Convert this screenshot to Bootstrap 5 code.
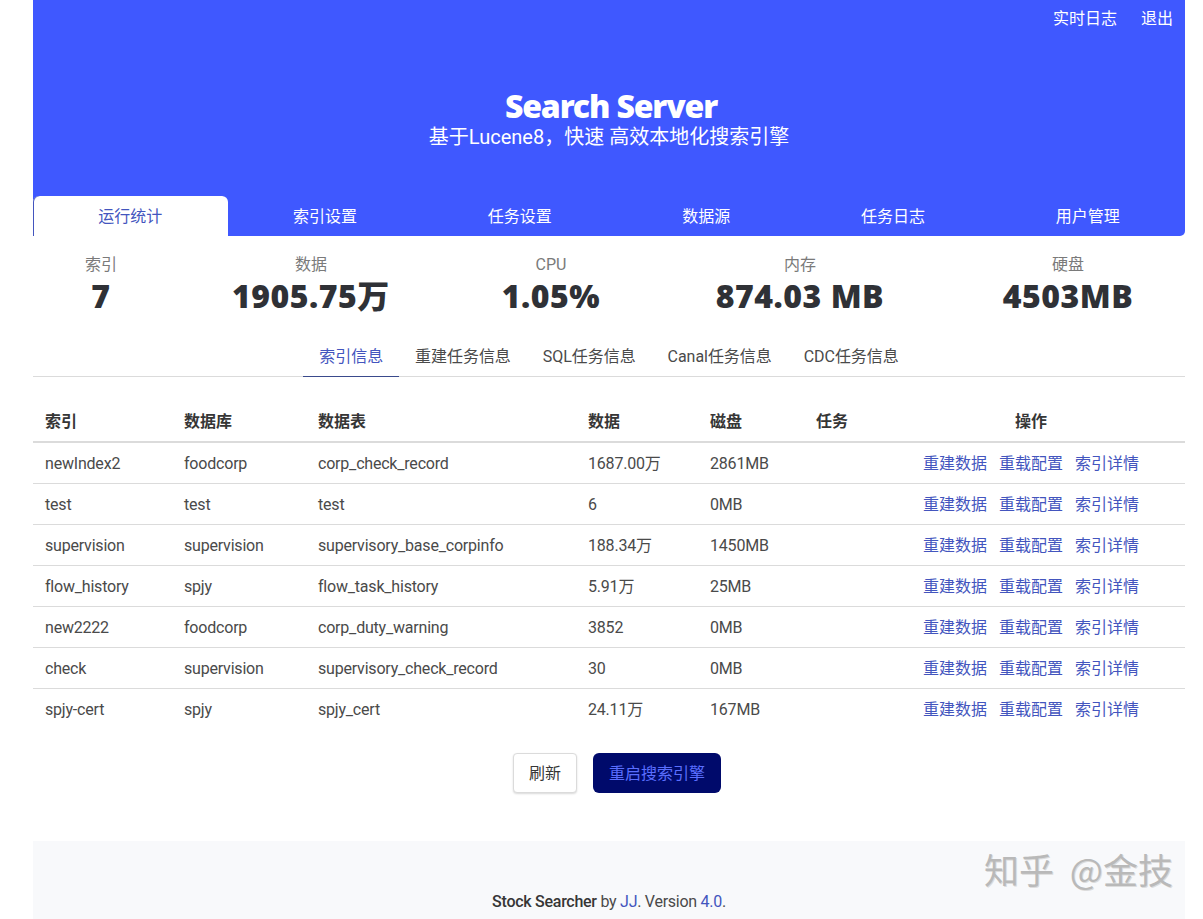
<!DOCTYPE html>
<html lang="zh-CN">
<head>
  <meta charset="UTF-8" />
  <title>Search Server</title>
  <link rel="stylesheet" href="https://cdn.jsdelivr.net/npm/bootstrap@5.3.0/dist/css/bootstrap.min.css" />
  <style>
    html, body { height: 919px; overflow: hidden; }
    body {
      background: #fff;
      color: #4a4a4a;
      font-family: Roboto, "Noto Sans CJK SC", sans-serif;
      font-size: 16px;
    }
    a { text-decoration: none; color: #4355be; }

    .page-wrap { margin: 0 18px 0 33px; width: 1152px; position: relative; }

    /* blue hero */
    .hero-box { background: #3f58ff; height: 236px; border-radius: 0 0 5px 5px; color: #fff; }
    .hero-top { height: 37px; gap: 24px; padding-right: 12px; }
    .hero-top a { color: #fff; line-height: 37px; }
    .hero-body { height: 159px; padding-top: 51px; }
    .hero-title { font-family: "Noto Sans", sans-serif; font-size: 32px; font-weight: 900; line-height: 36px; margin: 0; padding-left: 4px; color: #fff; letter-spacing: -1.15px; }
    .hero-sub { font-size: 20px; line-height: 26px; margin: 0; }
    .hero-tabs { height: 40px; }
    .hero-tabs .nav-link {
      color: #fff; height: 40px; padding: 9px 16px 7px; line-height: 24px;
      border: 0; border-radius: 6px 6px 0 0;
    }
    .hero-tabs .nav-link.active { background: #fff; color: #4355be; box-shadow: inset 1px 0 0 #4355be; }

    /* stats */
    .stat-row { display: grid; grid-template-columns: 136px 284px 196px 302px 1fr; padding-top: 17px; height: 100px; }
    .stat-label { color: #7a7a7a; line-height: 24px; }
    .stat-value { font-family: "Noto Sans", "Noto Sans CJK SC", sans-serif; color: #2f3136; font-size: 32px; font-weight: 900; line-height: 38px; white-space: nowrap; letter-spacing: .5px; }

    /* sub tabs */
    .sub-tabs { border-bottom: 1px solid #dbdbdb; height: 41px; letter-spacing: -.05px; }
    .sub-tabs a { color: #4a4a4a; padding: 9px 16px 7px; height: 41px; line-height: 24px; border-bottom: 1px solid #dbdbdb; }
    .sub-tabs a.active { color: #4355be; border-bottom-color: #3a4a8c; }

    /* index table */
    .index-table { table-layout: fixed; width: 1152px; margin: 24px 0 0; --bs-table-color: #4a4a4a; }
    .index-table th, .index-table td { padding: 9px 12px 7px; line-height: 24px; border-bottom: 1px solid #dbdbdb; }
    .index-table th { color: #363636; font-weight: 700; border-bottom-width: 2px; height: 41px; }
    .index-table td { height: 41px; white-space: nowrap; letter-spacing: -.2px; }
    .index-table tr:last-child td { border-bottom: 0; }
    .op-links { gap: 12px; letter-spacing: 0; }
    .c1 { width: 139px; } .c2 { width: 134px; } .c3 { width: 270px; }
    .c4 { width: 122px; } .c5 { width: 106px; } .c6 { width: 73px; } .c7 { width: 308px; }

    /* buttons */
    .btn-row { gap: 16px; margin-top: 23px; padding-left: 16px; }
    .btn-plain, .btn-plain:hover { height: 40px; width: 64px; padding: 2px 0 0; background: #fff; color: #363636; border: 1px solid #dbdbdb; border-radius: 4px; box-shadow: 0 1px 2px rgba(0,0,0,.15); }
    .btn-navy, .btn-navy:hover { height: 40px; width: 128px; padding: 2px 0 0; background: #000a6b; color: #5a6eff; border: 0; border-radius: 6px; }

    /* footer */
    .foot-box { background: #f8f9fb; margin-top: 48px; height: 78px; padding-top: 49px; line-height: 24px; color: #4a4a4a; letter-spacing: -.27px; }
    .foot-box strong { color: #363636; font-weight: 500; }

    .zhihu-mark {
      position: absolute; left: 951px; top: 846px;
      font-family: "Noto Sans CJK SC", sans-serif;
      font-size: 35px; line-height: 46px; font-weight: 400; color: #b9b9b9; white-space: nowrap;
      word-spacing: 8px; text-shadow: 1px 1px 0 #dcdcdc;
    }
  </style>
</head>
<body>
  <div class="page-wrap">
    <section class="hero-box d-flex flex-column">
      <div class="hero-top d-flex justify-content-end">
        <a href="#">实时日志</a>
        <a href="#">退出</a>
      </div>
      <div class="hero-body text-center">
        <h1 class="hero-title">Search Server</h1>
        <p class="hero-sub">基于Lucene8，快速 高效本地化搜索引擎</p>
      </div>
      <ul class="nav nav-fill hero-tabs">
        <li class="nav-item"><a class="nav-link active" href="#">运行统计</a></li>
        <li class="nav-item"><a class="nav-link" href="#">索引设置</a></li>
        <li class="nav-item"><a class="nav-link" href="#">任务设置</a></li>
        <li class="nav-item"><a class="nav-link" href="#">数据源</a></li>
        <li class="nav-item"><a class="nav-link" href="#">任务日志</a></li>
        <li class="nav-item"><a class="nav-link" href="#">用户管理</a></li>
      </ul>
    </section>

    <section class="stat-row text-center">
      <div><div class="stat-label">索引</div><div class="stat-value">7</div></div>
      <div><div class="stat-label">数据</div><div class="stat-value">1905.75万</div></div>
      <div><div class="stat-label">CPU</div><div class="stat-value">1.05%</div></div>
      <div><div class="stat-label">内存</div><div class="stat-value">874.03 MB</div></div>
      <div><div class="stat-label">硬盘</div><div class="stat-value">4503MB</div></div>
    </section>

    <div class="sub-tabs d-flex justify-content-center">
      <a class="active" href="#">索引信息</a>
      <a href="#">重建任务信息</a>
      <a href="#">SQL任务信息</a>
      <a href="#">Canal任务信息</a>
      <a href="#">CDC任务信息</a>
    </div>

    <table class="table index-table">
      <colgroup>
        <col class="c1"><col class="c2"><col class="c3"><col class="c4"><col class="c5"><col class="c6"><col class="c7">
      </colgroup>
      <thead>
        <tr><th>索引</th><th>数据库</th><th>数据表</th><th>数据</th><th>磁盘</th><th>任务</th><th class="text-center">操作</th></tr>
      </thead>
      <tbody id="rows"></tbody>
    </table>

    <div class="btn-row d-flex justify-content-center">
      <button class="btn btn-plain" type="button">刷新</button>
      <button class="btn btn-navy" type="button">重启搜索引擎</button>
    </div>

    <footer class="foot-box text-center">
      <strong>Stock Searcher</strong> by <a href="#">JJ</a>. Version <a href="#">4.0</a>.
    </footer>

    <div class="zhihu-mark">知乎 @金技</div>
  </div>

  <script src="https://cdn.jsdelivr.net/npm/bootstrap@5.3.0/dist/js/bootstrap.bundle.min.js"></script>
  <script>
    const indexes = [
      ["newIndex2", "foodcorp", "corp_check_record", "1687.00万", "2861MB"],
      ["test", "test", "test", "6", "0MB"],
      ["supervision", "supervision", "supervisory_base_corpinfo", "188.34万", "1450MB"],
      ["flow_history", "spjy", "flow_task_history", "5.91万", "25MB"],
      ["new2222", "foodcorp", "corp_duty_warning", "3852", "0MB"],
      ["check", "supervision", "supervisory_check_record", "30", "0MB"],
      ["spjy-cert", "spjy", "spjy_cert", "24.11万", "167MB"],
    ];
    document.getElementById("rows").innerHTML = indexes.map((r) =>
      "<tr>" + r.map((c) => "<td>" + c + "</td>").join("") +
      '<td></td><td><div class="op-links d-flex justify-content-center">' +
      '<a href="#">重建数据</a><a href="#">重载配置</a><a href="#">索引详情</a></div></td></tr>'
    ).join("");
  </script>
</body>
</html>
